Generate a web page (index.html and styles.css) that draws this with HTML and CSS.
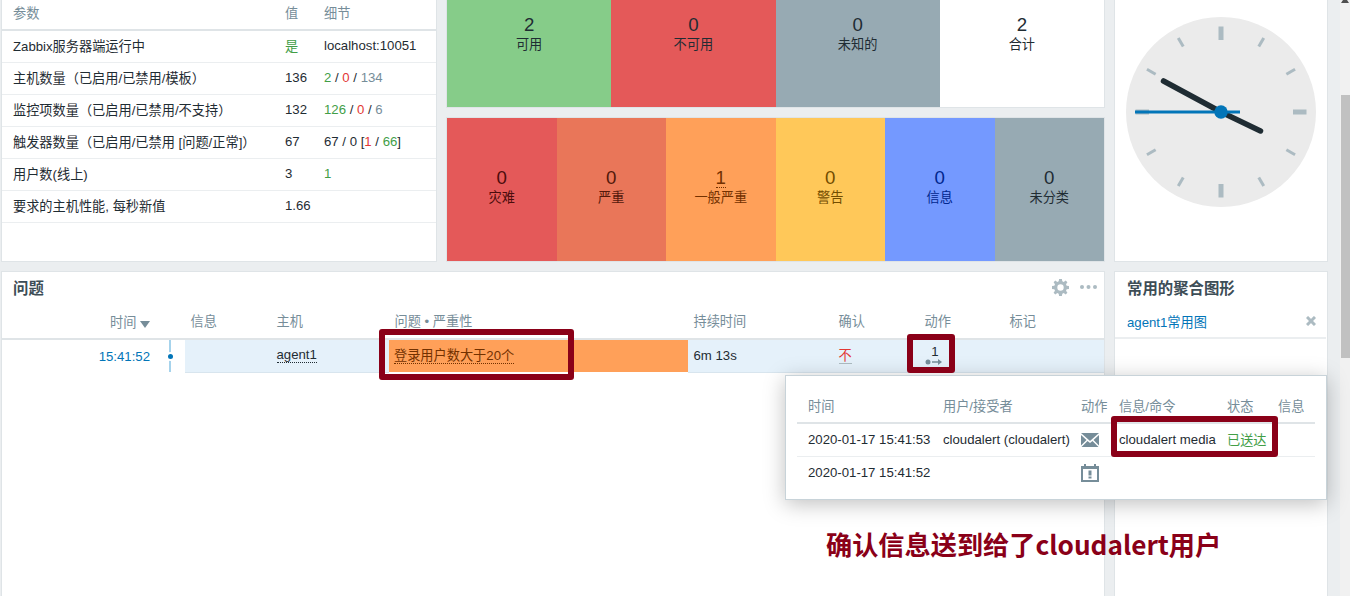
FILE: index.html
```html
<!DOCTYPE html>
<html lang="zh-CN">
<head>
<meta charset="utf-8">
<title>仪表板</title>
<link rel="stylesheet" href="styles.css">
</head>
<body>
<div class="page">
  <main class="dash">
    <section class="widget info">
      <table class="sys">
        <colgroup><col class="sys-a"><col class="sys-b"><col></colgroup>
        <thead><tr><th>参数</th><th>值</th><th>细节</th></tr></thead>
        <tbody>
          <tr><td>Zabbix服务器端运行中</td><td class="ok">是</td><td>localhost:10051</td></tr>
          <tr><td>主机数量（已启用/已禁用/模板）</td><td>136</td><td><span class="ok">2</span> / <span class="bad">0</span> / <span class="mute">134</span></td></tr>
          <tr><td>监控项数量（已启用/已禁用/不支持）</td><td>132</td><td><span class="ok">126</span> / <span class="bad">0</span> / <span class="mute">6</span></td></tr>
          <tr><td>触发器数量（已启用/已禁用 [问题/正常]）</td><td>67</td><td>67 / 0 [<span class="bad">1</span> / <span class="ok">66</span>]</td></tr>
          <tr><td>用户数(线上)</td><td>3</td><td class="ok">1</td></tr>
          <tr><td>要求的主机性能, 每秒新值</td><td>1.66</td><td></td></tr>
        </tbody>
      </table>
    </section>

    <div class="status-col">
      <section class="widget hosts">
        <div class="cell c-green"><b>2</b><span>可用</span></div>
        <div class="cell c-red"><b>0</b><span>不可用</span></div>
        <div class="cell c-grey"><b>0</b><span>未知的</span></div>
        <div class="cell c-white"><b>2</b><span>合计</span></div>
      </section>
      <section class="widget sev">
        <div class="cell s-dis"><b>0</b><span>灾难</span></div>
        <div class="cell s-high"><b>0</b><span>严重</span></div>
        <div class="cell s-avg"><b class="hint">1</b><span>一般严重</span></div>
        <div class="cell s-warn"><b>0</b><span>警告</span></div>
        <div class="cell s-info"><b>0</b><span>信息</span></div>
        <div class="cell s-na"><b>0</b><span>未分类</span></div>
      </section>
    </div>

    <section class="widget clock">
      <svg class="clock-svg" viewBox="0 0 212 262" width="212" height="262">
        <circle class="face" cx="106" cy="112" r="95"/>
        <g transform="translate(106 112)">
          <rect class="tick" x="-2.5" y="-85.500" width="5" height="13.500"/>
          <rect class="tick" x="-2.5" y="-85.500" width="5" height="13.500" transform="rotate(90)"/>
          <rect class="tick" x="-2.5" y="-85.500" width="5" height="13.500" transform="rotate(180)"/>
          <rect class="tick" x="-2.5" y="-85.500" width="5" height="13.500" transform="rotate(270)"/>
          <rect class="tick" x="-1.500" y="-85.500" width="3" height="10" transform="rotate(30)"/>
          <rect class="tick" x="-1.500" y="-85.500" width="3" height="10" transform="rotate(60)"/>
          <rect class="tick" x="-1.500" y="-85.500" width="3" height="10" transform="rotate(120)"/>
          <rect class="tick" x="-1.500" y="-85.500" width="3" height="10" transform="rotate(150)"/>
          <rect class="tick" x="-1.500" y="-85.500" width="3" height="10" transform="rotate(210)"/>
          <rect class="tick" x="-1.500" y="-85.500" width="3" height="10" transform="rotate(240)"/>
          <rect class="tick" x="-1.500" y="-85.500" width="3" height="10" transform="rotate(300)"/>
          <rect class="tick" x="-1.500" y="-85.500" width="3" height="10" transform="rotate(330)"/>
          <line class="hand" x1="0" y1="0" x2="-57.500" y2="-31"/>
          <line class="hand" x1="0" y1="0" x2="39.500" y2="19"/>
          <line class="sec" x1="-86" y1="0" x2="19" y2="0"/>
          <circle class="hub" r="6.700"/>
        </g>
      </svg>
    </section>

    <section class="widget problems">
      <header class="w-head">
        <h4>问题</h4>
        <div class="w-tools">
          <svg class="gear" viewBox="0 0 16 16" width="17" height="17"><path d="M6.700 0h2.600l.4 2.200 1.300.6L12.900 1.500l1.600 1.600-1.300 1.900.6 1.300 2.200.4v2.600l-2.200.4-.6 1.300 1.300 1.900-1.600 1.600-1.900-1.300-1.300.6-.4 2.200H6.700l-.4-2.200-1.300-.6-1.900 1.300-1.600-1.600 1.300-1.900-.6-1.300L0 9.300V6.700l2.200-.4.6-1.300L1.500 3.100l1.600-1.600L5 2.800l1.300-.6zM8 5a3 3 0 1 0 0 6 3 3 0 0 0 0-6z" fill-rule="evenodd"/></svg>
          <svg class="dots" viewBox="0 0 17 4" width="17" height="4"><circle cx="2" cy="2" r="2"/><circle cx="8.500" cy="2" r="2"/><circle cx="15" cy="2" r="2"/></svg>
        </div>
      </header>
      <table class="prob">
        <colgroup><col class="p1"><col class="p2"><col class="p3"><col class="p4"><col class="p5"><col class="p6"><col class="p7"><col class="p8"><col></colgroup>
        <thead>
          <tr>
            <th class="t-time">时间 <i class="sort"></i></th><th></th><th>信息</th><th>主机</th><th>问题 • 严重性</th><th>持续时间</th><th>确认</th><th>动作</th><th>标记</th>
          </tr>
        </thead>
        <tbody>
          <tr>
            <td class="t-time link">15:41:52</td>
            <td class="tl"><i class="tl-dot"></i></td>
            <td class="rowbg"></td>
            <td class="rowbg"><span class="dotted">agent1</span></td>
            <td class="sevcell"><span class="dotted">登录用户数大于20个</span></td>
            <td class="rowbg">6m 13s</td>
            <td class="rowbg"><span class="ack">不</span></td>
            <td class="rowbg act">
              <div class="act-in">
                <span class="act-n">1</span>
                <svg viewBox="0 0 17 6" width="17" height="6"><circle class="ico" cx="3" cy="3" r="2.500"/><path class="ico" d="M7 2.300h6V0l4 3-4 3V3.700H7z"/></svg>
              </div>
            </td>
            <td class="rowbg"></td>
          </tr>
        </tbody>
      </table>
    </section>

    <section class="widget favs">
      <header class="w-head"><h4>常用的聚合图形</h4></header>
      <div class="fav-row">
        <a class="link">agent1常用图</a>
        <svg viewBox="0 0 10 10" width="10" height="10"><path class="x" d="M1 1l8 8M9 1l-8 8"/></svg>
      </div>
    </section>
  </main>

  <aside class="scrollbar"><i class="thumb"></i></aside>

  <div class="popup">
    <table class="log">
      <colgroup><col class="l1"><col class="l2"><col class="l3"><col class="l4"><col class="l5"><col></colgroup>
      <thead><tr><th>时间</th><th>用户/接受者</th><th>动作</th><th>信息/命令</th><th>状态</th><th>信息</th></tr></thead>
      <tbody>
        <tr>
          <td>2020-01-17 15:41:53</td><td>cloudalert (cloudalert)</td>
          <td><svg viewBox="0 0 18 14" width="18" height="14"><path class="ico" d="M0 0h18L9 8zM0 2l5.500 5L0 12.500zM18 2v10.500L12.500 7zM6.500 8L9 10l2.500-2 6 6H.5z"/></svg></td>
          <td>cloudalert media</td><td class="ok">已送达</td><td></td>
        </tr>
        <tr>
          <td>2020-01-17 15:41:52</td><td></td>
          <td><svg viewBox="0 0 18 18" width="18" height="18"><path class="ico" fill-rule="evenodd" d="M3 0h2v2h8V0h2v2h3v16H0V2h3zM2 5v11h14V5zM7.500 6.500h3v5h-3zM7.500 12.500h3v2h-3z"/></svg></td>
          <td></td><td></td><td></td>
        </tr>
      </tbody>
    </table>
  </div>

  <i class="mark mark-a"></i>
  <i class="mark mark-b"></i>
  <i class="mark mark-c"></i>
  <p class="note">确认信息送到给了cloudalert用户</p>
</div>
</body>
</html>
```

FILE: styles.css
```css
* { box-sizing: border-box; }
html, body { margin: 0; height: 100%; overflow: hidden; }
body {
  font-family: "Liberation Sans", "Noto Sans CJK SC", sans-serif;
  font-size: 13.2px;
  color: #1f2c33;
  background: #ebeef0;
}
.page { position: relative; display: flex; width: 1350px; height: 596px; overflow: hidden; }
.dash {
  width: 1340px;
  padding-left: 1px;
  display: grid;
  grid-template-columns: 436px 658px 213px;
  grid-template-rows: 262px 400px;
  column-gap: 10px;
  row-gap: 9px;
  align-content: start;
}
.status-col, .clock, .favs { margin-left: -1px; }
.problems { grid-column: 1 / 3; }
.widget { background: #fff; border: 1px solid #dfe4e7; border-top-width: 0; }
.problems, .favs { border-top-width: 1px; }
table { border-collapse: collapse; table-layout: fixed; width: 100%; }
th { font-weight: 400; color: #768d99; text-align: left; }
.ok { color: #429e47; }
.bad { color: #e33734; }
.mute { color: #768d99; }
.link { color: #0275b8; }

/* system info */
.sys-a { width: 272px; }
.sys-b { width: 39px; }
.sys th, .sys td { padding: 0 0 2px 11px; white-space: nowrap; overflow: visible; }
.sys thead tr { height: 30px; border-bottom: 2px solid #dfe4e7; }
.sys thead th { padding-bottom: 4px; }
.sys tbody tr { height: 32px; border-bottom: 1px solid #ebeef0; }

/* status */
.status-col { display: flex; flex-direction: column; gap: 9px; }
.hosts { height: 108px; display: grid; grid-template-columns: repeat(4, 1fr); }
.sev { height: 145px; border-top-width: 1px; display: grid; grid-template-columns: repeat(6, 1fr); }
.cell { display: flex; flex-direction: column; align-items: center; line-height: 1; }
.cell b { font-weight: 400; font-size: 18.7px; line-height: 20px; }
.cell span { font-size: 13.2px; line-height: 20px; }
.hosts .cell { padding-top: 15px; }
.sev .cell { justify-content: center; padding-bottom: 3px; }
.hint { border-bottom: 1px dotted currentColor; height: 20px; }
.c-green { background: #86cc89; }
.c-red { background: #e45959; }
.c-grey { background: #97aab3; }
.c-white { background: #fff; }
.s-dis { background: #e45959; color: #4b0c0c; }
.s-high { background: #e97659; color: #52190b; }
.s-avg { background: #ffa059; color: #733100; }
.s-warn { background: #ffc859; color: #734d00; }
.s-info { background: #7499ff; color: #00268e; }
.s-na { background: #97aab3; color: #1f2c33; }

/* clock */
.clock { overflow: hidden; }
.clock-svg { display: block; }
.face { fill: #ebebeb; }
.tick { fill: #acbbc2; }
.hand { stroke: #1f2c33; stroke-width: 5.500; stroke-linecap: round; }
.sec { stroke: #0275b8; stroke-width: 3; }
.hub { fill: #0275b8; }

/* widget header */
.w-head { height: 33px; display: flex; align-items: center; justify-content: space-between; padding: 0 7px 3px 11px; }
.w-head h4 { margin: 0; font-size: 15.4px; font-weight: 700; color: #3d4d56; }
.w-tools { display: flex; align-items: center; gap: 11px; }
.gear { fill: #acbbc2; }
.dots { fill: #acbbc2; }

/* problems */
.p1 { width: 155px; }
.p2 { width: 28px; }
.p3 { width: 86px; }
.p4 { width: 118px; }
.p5 { width: 299px; }
.p6 { width: 145px; }
.p7 { width: 86px; }
.p8 { width: 85px; }
.prob th, .prob td { padding: 0 0 0 5.500px; white-space: nowrap; }
.prob thead tr { height: 34px; border-bottom: 2px solid #dfe4e7; }
.prob thead th { padding-bottom: 2px; }
.prob tbody tr { height: 33px; }
.prob .t-time { text-align: right; padding: 0 7px 0 0; }
.sort { display: inline-block; width: 0; height: 0; border: 5px solid transparent; border-top: 7px solid #768d99; border-bottom-width: 0; vertical-align: -1px; }
.tl { position: relative; }
.prob .tl { padding: 0 0 0 12px; background: linear-gradient(#a6d3ec, #a6d3ec) 12px 0 / 2px 100% no-repeat; }
.tl-dot { display: block; width: 5px; height: 5px; margin-left: -1.500px; border-radius: 50%; background: #0275b8; box-shadow: 0 0 0 2px #fff; }
.rowbg { background: #e5f1fa; border-bottom: 1px solid #d8e5ee; }
.prob .sevcell { background: #ffa059; color: #733100; padding: 0 0 4px 5px; }
.prob .rowbg:has(.dotted), .prob .rowbg:has(.ack) { padding-bottom: 3px; }
.dotted { border-bottom: 1px dotted currentColor; }
.ack { color: #e33734; border-bottom: 1px solid #acbbc2; }
.act-in { display: flex; flex-direction: column; align-items: flex-end; width: 17px; line-height: 14px; }
.act-n { margin: -2px 3px 0 0; }
.act-in svg { display: block; margin-top: 0; }
.ico { fill: #768d99; }

/* favourites */
.favs .w-head { height: 33px; }
.fav-row { height: 34px; display: flex; align-items: center; justify-content: space-between; padding: 0 10px 0 12px; border-bottom: 2px solid #ebeef0; margin-right: 1px; }
.favs .w-head { padding-left: 12px; }
.x { stroke: #acbbc2; stroke-width: 3; fill: none; }

/* scrollbar */
.scrollbar { position: relative; width: 10px; background: #f1f1f1; }
.thumb { display: block; height: 263px; margin: 95px 0 0 1px; background: #c1c1c1; }
.scrollbar::before { content: ""; position: absolute; left: 1px; top: -3px; border: 4px solid transparent; border-top: 0; border-bottom: 6px solid #505050; }

/* popup */
.popup { position: absolute; left: 785px; top: 375px; width: 542px; height: 125px; padding: 13px 11px 0; background: #fff; border: 1px solid #c8d3d9; box-shadow: 0 4px 20px rgba(0, 0, 0, .25); }
.log { width: 518px; }
.l1 { width: 135px; }
.l2 { width: 138px; }
.l3 { width: 38px; }
.l4 { width: 108px; }
.l5 { width: 51px; }
.log th, .log td { padding: 0 0 0 11px; white-space: nowrap; }
.log thead tr { height: 34px; border-bottom: 2px solid #dfe4e7; }
.log tbody tr { height: 33px; border-bottom: 1px solid #ebeef0; }
.log tbody tr:last-child { border-bottom: 0; }
.log svg { display: block; }

/* annotations */
.mark { position: absolute; border: 6px solid #8a0018; border-radius: 3px; }
.mark-a { left: 379px; top: 329px; width: 195px; height: 51px; }
.mark-b { left: 907px; top: 334px; width: 48px; height: 39px; }
.mark-c { left: 1111px; top: 416px; width: 167px; height: 41px; }
.note { position: absolute; left: 826px; top: 526px; margin: 0; font-family: "Noto Sans CJK SC", sans-serif; font-size: 26.200px; line-height: 36px; font-weight: 700; color: #8a0018; white-space: nowrap; }
```
